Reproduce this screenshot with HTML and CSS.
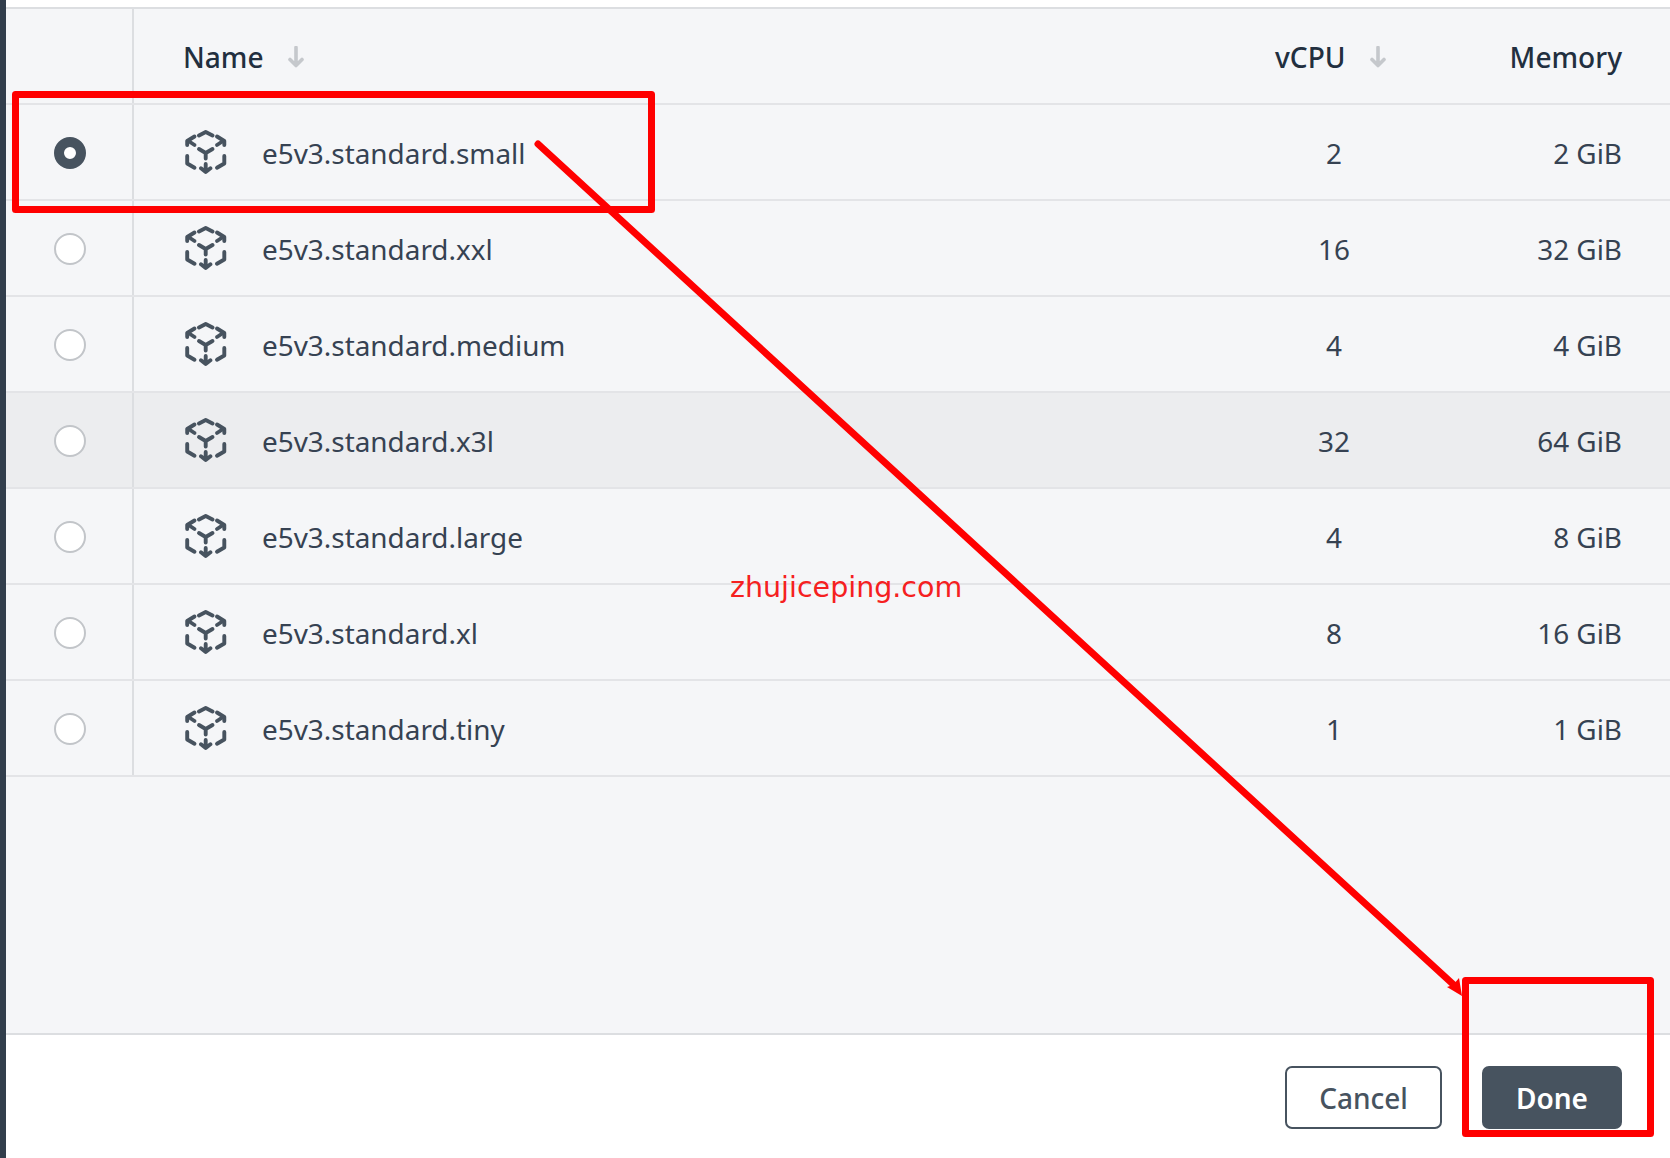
FILE: index.html
```html
<!DOCTYPE html>
<html lang="en">
<head>
<meta charset="utf-8">
<title>Select a shape</title>
<link rel="stylesheet" href="styles.css">
</head>
<body>
<svg class="defs" width="0" height="0" aria-hidden="true">
  <symbol id="shape" viewBox="0 0 42 44">
    <g fill="none" stroke="#47535f" stroke-width="3.9" stroke-linecap="round" stroke-linejoin="round">
      <path d="M14 5.5 L20.7 2 L27.5 5.5"/>
      <path d="M9.5 6.5 L2.2 11 V15"/>
      <path d="M32 6.5 L39.3 11 V15"/>
      <path d="M3.5 11 L9.5 15"/>
      <path d="M38 11 L32 15"/>
      <path d="M14 19 L20.7 23 L27.5 19 M20.7 23 V28.5"/>
      <path d="M2.2 26 V33.5 L9.5 37.8"/>
      <path d="M39.3 26 V33.5 L32 37.8"/>
      <path d="M20.7 34 V41.5 M16 38.3 L20.7 42 L25.4 38.3"/>
    </g>
  </symbol>
  <symbol id="sort" viewBox="0 0 16 22">
    <path d="M8 1.5 V19.5 M2 13.5 L8 19.5 L14 13.5" fill="none" stroke="#c5c8cc" stroke-width="3.6" stroke-linecap="round" stroke-linejoin="round"/>
  </symbol>
</svg>

<div class="page">
  <div class="backdrop"></div>
  <main class="dialog">
    <div class="dialog-top"></div>
    <div class="body">
      <div class="row head">
        <div class="cell-check"></div>
        <div class="cell-name"><span>Name</span><svg class="sort"><use href="#sort"/></svg></div>
        <div class="cell-cpu"><span>vCPU</span><svg class="sort"><use href="#sort"/></svg></div>
        <div class="cell-mem">Memory</div>
      </div>

      <div class="row">
        <div class="cell-check"><span class="radio checked"></span></div>
        <div class="cell-name"><svg class="shape"><use href="#shape"/></svg><span>e5v3.standard.small</span></div>
        <div class="cell-cpu num">2</div>
        <div class="cell-mem">2 GiB</div>
      </div>
      <div class="row">
        <div class="cell-check"><span class="radio"></span></div>
        <div class="cell-name"><svg class="shape"><use href="#shape"/></svg><span>e5v3.standard.xxl</span></div>
        <div class="cell-cpu num">16</div>
        <div class="cell-mem">32 GiB</div>
      </div>
      <div class="row">
        <div class="cell-check"><span class="radio"></span></div>
        <div class="cell-name"><svg class="shape"><use href="#shape"/></svg><span>e5v3.standard.medium</span></div>
        <div class="cell-cpu num">4</div>
        <div class="cell-mem">4 GiB</div>
      </div>
      <div class="row hover">
        <div class="cell-check"><span class="radio"></span></div>
        <div class="cell-name"><svg class="shape"><use href="#shape"/></svg><span>e5v3.standard.x3l</span></div>
        <div class="cell-cpu num">32</div>
        <div class="cell-mem">64 GiB</div>
      </div>
      <div class="row">
        <div class="cell-check"><span class="radio"></span></div>
        <div class="cell-name"><svg class="shape"><use href="#shape"/></svg><span>e5v3.standard.large</span></div>
        <div class="cell-cpu num">4</div>
        <div class="cell-mem">8 GiB</div>
      </div>
      <div class="row">
        <div class="cell-check"><span class="radio"></span></div>
        <div class="cell-name"><svg class="shape"><use href="#shape"/></svg><span>e5v3.standard.xl</span></div>
        <div class="cell-cpu num">8</div>
        <div class="cell-mem">16 GiB</div>
      </div>
      <div class="row">
        <div class="cell-check"><span class="radio"></span></div>
        <div class="cell-name"><svg class="shape"><use href="#shape"/></svg><span>e5v3.standard.tiny</span></div>
        <div class="cell-cpu num">1</div>
        <div class="cell-mem">1 GiB</div>
      </div>
    </div>
    <footer class="footer">
      <button class="btn btn-cancel" type="button">Cancel</button>
      <button class="btn btn-done" type="button">Done</button>
    </footer>
  </main>
</div>

<svg class="annotations" width="1670" height="1158" viewBox="0 0 1670 1158" aria-hidden="true">
  <g fill="none" stroke="#ff0000" stroke-width="7" stroke-linejoin="round">
    <rect x="15.5" y="94.5" width="636" height="115"/>
    <rect x="1465.5" y="980.5" width="185" height="153"/>
  </g>
  <path d="M538 144 L1455 986" fill="none" stroke="#ff0000" stroke-width="7" stroke-linecap="round"/>
  <path d="M1462 996 L1447 987 L1453 985 L1459 978 Z" fill="#ff0000"/>
</svg>
<div class="watermark">zhujiceping.com</div>
</body>
</html>
```

FILE: styles.css
```css
* { box-sizing: border-box; }

html, body {
  margin: 0;
  height: 1158px;
  overflow: hidden;
  background: #fff;
}

body {
  position: relative;
  font-family: "Noto Sans", "Open Sans", sans-serif;
  color: #364252;
}

.defs { position: absolute; }

.page {
  display: flex;
  height: 1158px;
}

.backdrop {
  width: 6px;
  flex: none;
  background: #323e4c;
}

.dialog {
  flex: 1;
  display: flex;
  flex-direction: column;
  background: #fff;
}

.dialog-top {
  height: 7px;
  flex: none;
  background: #fff;
}

.body {
  flex: 1;
  background: #f5f6f8;
  border-top: 2px solid #dcdee1;
  border-bottom: 2px solid #dcdee1;
}

.row {
  display: flex;
  align-items: stretch;
  height: 96px;
  border-bottom: 2px solid #e3e4e7;
  font-size: 27.9px;
}

.row.hover { background: #ecedef; }

.head {
  font-size: 28.1px;
  font-weight: 500;
  color: #222f3f;
}

.cell-check {
  width: 128px;
  flex: none;
  display: flex;
  align-items: center;
  justify-content: center;
  padding: 2px 0 0 2px;
  border-right: 2px solid #dcdee1;
}

.cell-name {
  flex: 1;
  display: flex;
  align-items: center;
  padding: 2px 0 0 49px;
}

.cell-cpu {
  width: 118px;
  flex: none;
  display: flex;
  align-items: center;
  padding-top: 2px;
}

.cell-cpu.num { justify-content: center; }

.cell-mem {
  width: 277px;
  flex: none;
  display: flex;
  align-items: center;
  justify-content: flex-end;
  padding: 2px 48px 0 0;
}

.sort {
  width: 16px;
  height: 22px;
  margin-left: 24px;
  flex: none;
}

.shape {
  width: 42px;
  height: 44px;
  flex: none;
  margin: 0 35px 2px 2px;
}

.radio {
  display: block;
  width: 32px;
  height: 32px;
  border-radius: 50%;
  background: #fff;
  border: 2px solid #c2c5c9;
}

.radio.checked {
  background: #fff;
  border: 10px solid #47535f;
}

.footer {
  height: 123px;
  flex: none;
  display: flex;
  justify-content: flex-end;
  align-items: flex-start;
  gap: 40px;
  padding: 31px 48px 0 0;
  background: #fff;
}

.btn {
  height: 63px;
  border-radius: 7px;
  font-family: inherit;
  font-size: 28px;
  font-weight: 500;
  padding: 0;
}

.btn-cancel {
  width: 157px;
  background: #fff;
  color: #47535f;
  border: 2px solid #47535f;
}

.btn-done {
  width: 140px;
  background: #47535f;
  color: #fff;
  border: 0;
  font-weight: 600;
}

.annotations {
  position: absolute;
  left: 0;
  top: 0;
  pointer-events: none;
}

.watermark {
  position: absolute;
  left: 730px;
  top: 571px;
  font-family: cursive, "DejaVu Sans", sans-serif;
  font-size: 28.5px;
  font-weight: 500;
  color: #f52020;
  white-space: nowrap;
}
```
